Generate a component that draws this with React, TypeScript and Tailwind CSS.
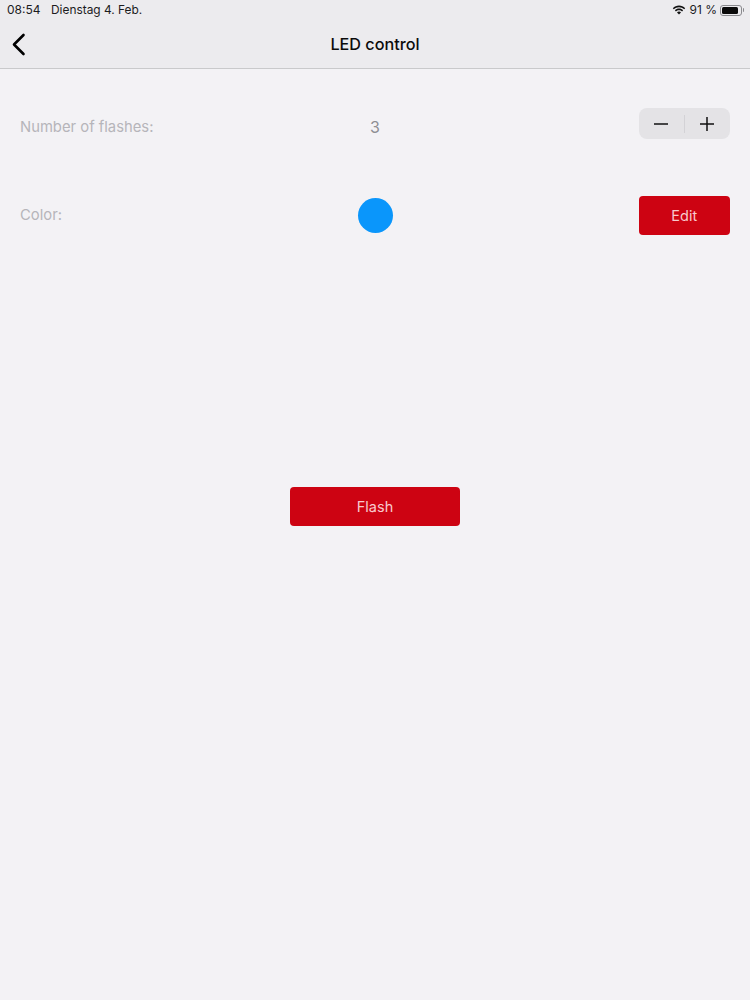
function StatusBar() {
    return (
        <div className="flex items-center justify-between h-5 pl-[7px] pr-[6px] text-[12px] leading-none text-[#1c1c1e]">
            <div className="flex items-center">
                <span className="w-[37px]">08:54</span>
                <span className="ml-[7px] text-[11.9px]">Dienstag 4. Feb.</span>
            </div>
            <div className="flex items-center">
                <svg className="w-[14px] h-[11px]" viewBox="0 0 14 11" fill="#111">
                    <path d="M7 2.2c2 0 3.8.8 5.2 2.1l1-1.1C11.5 1.6 9.4.6 7 .6S2.5 1.6.8 3.2l1 1.1C3.2 3 5 2.2 7 2.2z" />
                    <path d="M7 5.2c1.2 0 2.3.5 3.1 1.2l1-1.1C10 4.2 8.6 3.6 7 3.6s-3 .6-4.1 1.7l1 1.1C4.7 5.7 5.8 5.2 7 5.2z" />
                    <path d="M7 6.6c-.8 0-1.4.3-2 .8L7 9.6l2-2.2c-.6-.5-1.2-.8-2-.8z" />
                </svg>
                <span className="ml-[4px]">91 %</span>
                <div className="ml-[3px] flex items-center">
                    <div className="w-[22px] h-[11px] rounded-[3px] border border-[#8a8a8e] p-[1px]">
                        <div className="h-full w-[91%] rounded-[1.5px] bg-[#0a0a0a]"></div>
                    </div>
                    <div className="ml-[1px] w-[1px] h-[4px] rounded-r-sm bg-[#8a8a8e]"></div>
                </div>
            </div>
        </div>
    );
}

function NavBar() {
    return (
        <div className="relative flex items-center justify-center h-[49px] border-b border-[#c9c9cb]">
            <svg className="absolute left-[10px] top-[11px] w-[18px] h-[26px]" viewBox="0 0 18 26" fill="none" stroke="#000" strokeWidth="2.6" strokeLinecap="round" strokeLinejoin="round">
                <path d="M13.5 4 4 13.5 13.5 23" />
            </svg>
            <span className="text-[16.2px] font-medium text-[#0b0b0b]">LED control</span>
        </div>
    );
}

function App() {
    return (
        <div className="flex flex-col h-[1000px] bg-[#f3f2f5] font-['Inter','Liberation_Sans',sans-serif]">
            <div className="bg-[#ecebee]">
                <StatusBar />
                <NavBar />
            </div>

            <main className="flex flex-col px-5 pt-[39px]">
                <div className="grid grid-cols-[1fr_auto_1fr] items-center h-[39px]">
                    <span className="pb-[1px] text-[14.8px] text-[#b6b5ba]">Number of flashes:</span>
                    <span className="pb-[2px] w-[35px] text-center text-[16px] text-[#8e8e93]">3</span>
                    <div className="justify-self-end flex items-center w-[91.5px] h-[31px] mb-[9px] rounded-lg bg-[#e4e3e6]">
                        <div className="flex flex-1 justify-center">
                            <svg className="w-[14px] h-[14px]" viewBox="0 0 14 14" stroke="#111" strokeWidth="1.5">
                                <path d="M0 7h14" />
                            </svg>
                        </div>
                        <div className="w-px h-[18px] bg-[#d3d2d6]"></div>
                        <div className="flex flex-1 justify-center">
                            <svg className="w-[14px] h-[14px]" viewBox="0 0 14 14" stroke="#111" strokeWidth="1.5">
                                <path d="M0 7h14M7 0v14" />
                            </svg>
                        </div>
                    </div>
                </div>

                <div className="grid grid-cols-[1fr_auto_1fr] items-center h-[39px] mt-[49px]">
                    <span className="text-[14.8px] text-[#b6b5ba]">Color:</span>
                    <div className="w-[35px] h-[35px] rounded-full bg-[#0a96fb]"></div>
                    <button className="justify-self-end w-[91.5px] h-[39px] rounded-[4px] bg-[#cd0312] text-[14.5px] text-[#f8c9cd]">
                        Edit
                    </button>
                </div>

                <div className="flex justify-center mt-[252px]">
                    <button className="w-[170px] h-[39px] rounded-[4px] bg-[#cd0312] text-[14.5px] text-[#f8c9cd]">
                        Flash
                    </button>
                </div>
            </main>
        </div>
    );
}

export default App;
